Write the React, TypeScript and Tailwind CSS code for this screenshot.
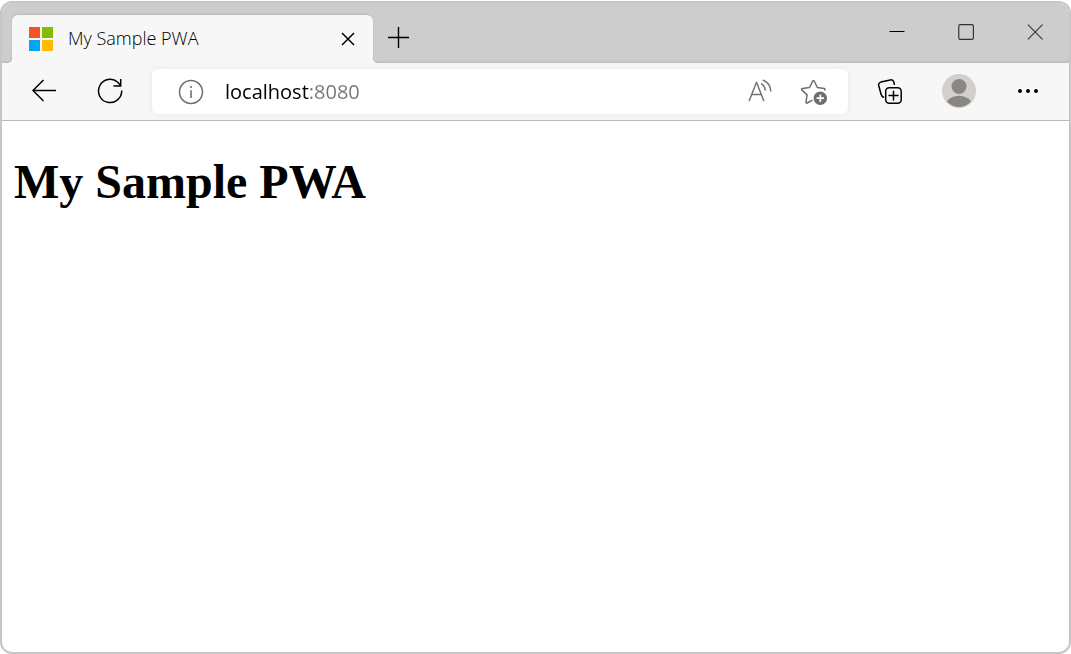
import { useState } from "react";

function MicrosoftLogo() {
  return (
    <svg width="24" height="24" viewBox="0 0 24 24" aria-hidden="true">
      <rect width="24" height="24" fill="#f3f3f3" />
      <rect width="11" height="11" fill="#f35325" />
      <rect x="13" width="11" height="11" fill="#81bc06" />
      <rect y="13" width="11" height="11" fill="#05a6f0" />
      <rect x="13" y="13" width="11" height="11" fill="#ffba08" />
    </svg>
  );
}

function TitleBar() {
  return (
    <header className="flex h-15 items-end bg-[#cdcdcd] pl-[2px] shadow-[inset_0_-2px_1px_#c3c3c3]">
      <div className="flex items-end">
        <svg width="8" height="8" viewBox="0 0 8 8" aria-hidden="true">
          <path d="M8 0V8H0V7.5H3Q7.500 7.500 7.500 3V0Z" fill="#f7f7f7" />
          <path d="M0 7.500H3Q7.500 7.500 7.500 3V0" fill="none" stroke="#bdbdbd" />
        </svg>
        <div className="flex h-12 w-[361px] items-center rounded-t-md bg-[#f7f7f7] pr-[18px] pl-[17px] shadow-[0_-1px_2px_#b8b8b8]">
          <MicrosoftLogo />
          <span className="ml-[15px] flex-1 pb-[2px] font-['Open_Sans',sans-serif] text-[18px] leading-6 font-[330] text-black">
            My Sample PWA
          </span>
          <button aria-label="Close tab" className="p-0">
            <svg width="14" height="14" viewBox="0 0 14 14" aria-hidden="true">
              <path d="M1 1L13 13M13 1L1 13" stroke="#000" strokeWidth="1.5" />
            </svg>
          </button>
        </div>
        <svg width="8" height="8" viewBox="0 0 8 8" aria-hidden="true">
          <path d="M0 0V8H8V7.5H5Q.5 7.500 .5 3V0Z" fill="#f7f7f7" />
          <path d="M8 7.500H5Q.5 7.500 .5 3V0" fill="none" stroke="#bdbdbd" />
        </svg>
      </div>
      <button aria-label="New tab" className="mb-[15px] ml-[7px]">
        <svg width="21" height="21" viewBox="0 0 21 21" aria-hidden="true">
          <path d="M10.500 0V21M0 10.500H21" stroke="#000" strokeWidth="1.4" />
        </svg>
      </button>
      <div className="ml-auto flex h-full items-start gap-[53px] pt-[21px] pr-[26px]">
        <button aria-label="Minimize">
          <svg width="16" height="16" viewBox="0 0 16 16" aria-hidden="true">
            <path d="M.5 7.500H15.500" stroke="#000" strokeWidth="1" />
          </svg>
        </button>
        <button aria-label="Maximize">
          <svg width="16" height="16" viewBox="0 0 16 16" aria-hidden="true">
            <rect x=".8" y=".6" width="14.600" height="14.800" rx="1.500" fill="none" stroke="#333" strokeWidth="1.200" />
          </svg>
        </button>
        <button aria-label="Close window">
          <svg width="16" height="16" viewBox="0 0 16 16" aria-hidden="true">
            <path d="M.9 .7L15.500 15.300M15.500 .7L.9 15.300" stroke="#333" strokeWidth="1.100" />
          </svg>
        </button>
      </div>
    </header>
  );
}

function AddressBar() {
  const [url, setUrl] = useState("localhost:8080");
  return (
    <form
      className="flex h-[45px] min-w-0 flex-1 items-center rounded-md bg-white pr-5 pl-[26px] shadow-[0_0_6px_#e8e8e8]"
      onSubmit={(e) => e.preventDefault()}
    >
      <button type="button" aria-label="View site information">
        <svg width="26" height="26" viewBox="0 0 26 26" aria-hidden="true">
          <circle cx="13" cy="13" r="11.500" fill="none" stroke="#6e6e6e" strokeWidth="1.500" />
          <path d="M13 11.300V19" stroke="#6e6e6e" strokeWidth="1.600" />
          <circle cx="13" cy="8" r="1.100" fill="#6e6e6e" />
        </svg>
      </button>
      <input
        aria-label="Address"
        value={url}
        onChange={(e) => setUrl(e.target.value)}
        className="ml-[21px] h-8 min-w-0 flex-1 bg-[linear-gradient(to_right,#000_84px,#757575_84px)] bg-clip-text font-['Open_Sans',sans-serif] text-[20px] text-transparent caret-black outline-none"
      />
      <button type="button" aria-label="Read aloud">
        <svg width="26" height="28" viewBox="0 0 26 28" fill="none" stroke="#757575" strokeWidth="1.500" strokeLinecap="round" aria-hidden="true">
          <path d="M2.300 22.500L9.500 4.200L16.700 22.500M5 16.500H14.200" strokeLinejoin="round" />
          <path d="M14.500 5.800C16.700 7 18 9.200 18.200 12M16.300 2.300C20.600 4 23.300 8 23.800 13" />
        </svg>
      </button>
      <button type="button" aria-label="Add this page to favorites" className="ml-[27px]">
        <svg width="28" height="28" viewBox="0 0 28 28" aria-hidden="true">
          <path
            d="M12 22.300L7.200 25C6.400 25.400 5.800 24.900 6 24L7.100 16.900L1.800 11.900C1.300 11.300 1.500 10.700 2.300 10.500L9.600 9.500L12.700 3C13.100 2.200 13.800 2.200 14.200 3L17.300 9.500L24.400 10.500C25.200 10.700 25.300 11.300 24.800 11.900"
            fill="none"
            stroke="#6e6e6e"
            strokeWidth="1.500"
            strokeLinecap="round"
            strokeLinejoin="round"
          />
          <circle cx="20.300" cy="20.200" r="6.700" fill="#6e6e6e" />
          <path d="M20.300 16.500V23.900M16.600 20.200H24" stroke="#fff" strokeWidth="1.700" />
        </svg>
      </button>
    </form>
  );
}

function Toolbar() {
  return (
    <nav aria-label="Browser toolbar" className="flex h-[58px] items-center border-b border-[#bababa] bg-[#f7f7f7] pr-[30px] pl-[29px]">
      <button aria-label="Back">
        <svg width="26" height="26" viewBox="0 0 26 26" fill="none" stroke="#000" strokeWidth="1.500" aria-hidden="true">
          <path d="M25 11.500H2M12.500 1L2 11.500L12.500 22" />
        </svg>
      </button>
      <button aria-label="Refresh" className="ml-10">
        <svg width="26" height="28" viewBox="0 0 26 28" fill="none" stroke="#000" strokeWidth="1.500" aria-hidden="true">
          <path d="M24.700 12.500A11.600 11.600 0 1 1 20.800 4.300L23.500 7.400M23.700 .9V7.900H16.500" />
        </svg>
      </button>
      <div className="ml-[29px] flex min-w-0 flex-1">
        <AddressBar />
      </div>
      <button aria-label="Collections" className="ml-[29px]">
        <svg width="26" height="26" viewBox="0 0 26 26" fill="none" stroke="#000" strokeWidth="1.500" strokeLinecap="round" aria-hidden="true">
          <path d="M6.500 18.200C4.900 17.500 4.400 16.500 4 15L1.700 6.500C1.300 4.700 2 3.600 3.800 3.100L13.300 .9C15.500 .5 16.300 1.200 16.800 3L17.300 5.300" />
          <rect x="8.700" y="8.800" width="15.500" height="15.500" rx="3.500" />
          <path d="M16.500 12.200V21M12 16.500H21" />
        </svg>
      </button>
      <button aria-label="Profile" className="ml-[38px]">
        <svg width="36" height="38" viewBox="0 0 36 38" aria-hidden="true">
          <clipPath id="avatar">
            <circle cx="18" cy="18" r="16" />
          </clipPath>
          <circle cx="18" cy="18" r="17" fill="#d2d0cd" />
          <g clipPath="url(#avatar)" fill="#8a8683">
            <circle cx="18" cy="13.500" r="7.500" />
            <ellipse cx="18" cy="32" rx="13" ry="9.300" />
          </g>
        </svg>
      </button>
      <button aria-label="Settings and more" className="ml-[40px]">
        <svg width="22" height="8" viewBox="0 0 22 8" aria-hidden="true">
          <circle cx="3" cy="3" r="2" />
          <circle cx="11" cy="3" r="2" />
          <circle cx="19" cy="3" r="2" />
        </svg>
      </button>
    </nav>
  );
}

export default function App() {
  return (
    <div className="flex min-h-screen flex-col bg-white pt-px">
      <div className="flex flex-1 flex-col overflow-hidden rounded-xl border-2 border-[#c6c6c6] bg-white">
        <TitleBar />
        <Toolbar />
        <main className="px-3 py-[33px]">
          <h1 className="font-['Liberation_Serif',serif] text-[48px] leading-14 font-bold text-black">My Sample PWA</h1>
        </main>
      </div>
    </div>
  );
}
